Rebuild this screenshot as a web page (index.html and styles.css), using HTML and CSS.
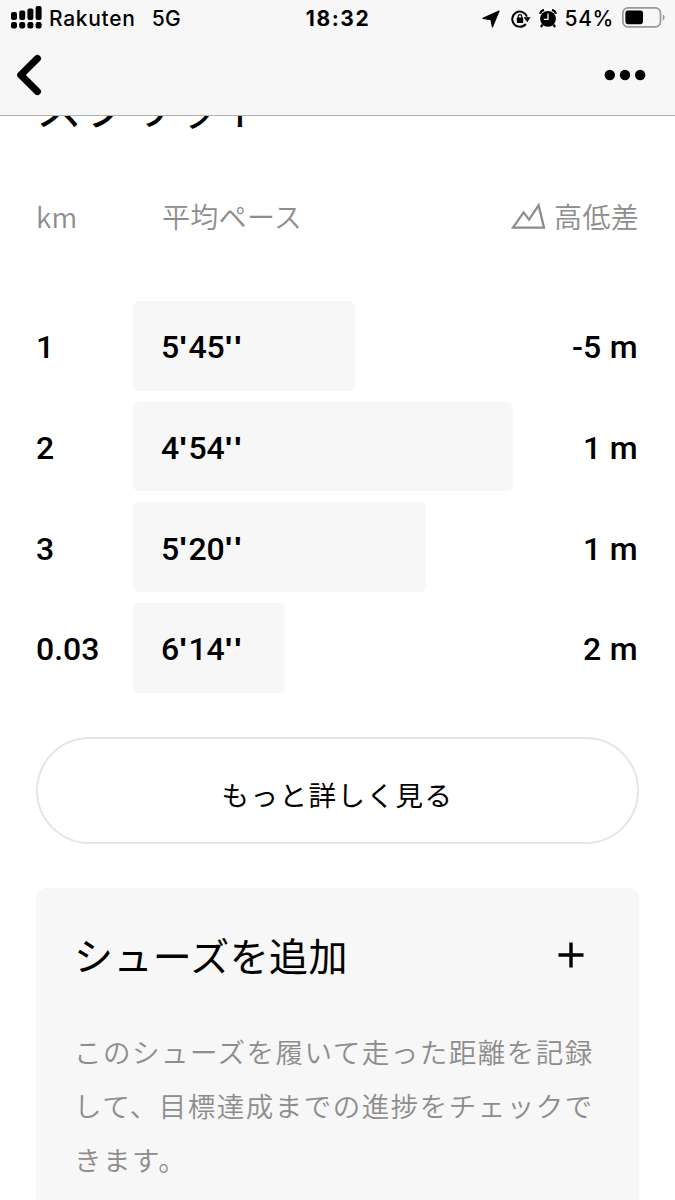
FILE: index.html
```html
<!DOCTYPE html>
<html lang="ja">
<head>
    <meta charset="UTF-8">
    <meta name="viewport" content="width=device-width, initial-scale=1.0">
    <title>スプリット</title>
    <link rel="stylesheet" href="styles.css">
</head>
<body>

    <header class="top-bar">
        <div class="status">
            <div class="status-left">
                <svg class="signal" width="31" height="24" viewBox="0 0 31 24">
                    <rect x="0" y="7" width="6" height="8" rx="2"/>
                    <rect x="8.2" y="5.6" width="6" height="9.4" rx="2"/>
                    <rect x="16.4" y="3.6" width="6" height="11.4" rx="2"/>
                    <rect x="24.6" y="1" width="6" height="14" rx="2"/>
                    <rect x="0" y="17" width="6" height="6.4" rx="2.2"/>
                    <rect x="8.2" y="17" width="6" height="6.4" rx="2.2"/>
                    <rect x="16.4" y="17" width="6" height="6.4" rx="2.2"/>
                    <rect x="24.6" y="17" width="6" height="6.4" rx="2.2"/>
                </svg>
                <span class="carrier">Rakuten</span>
                <span class="network">5G</span>
            </div>
            <div class="clock">18:32</div>
            <div class="status-right">
                <svg class="location" width="18" height="18" viewBox="0 0 18 18">
                    <path d="M17 1 L10.4 17 L9 9.6 L1 8.4 Z" stroke="#000" stroke-width="1.2" stroke-linejoin="round"/>
                </svg>
                <svg class="lock" width="20" height="18" viewBox="0 0 20 18">
                    <path d="M14.8 14 A7.6 7.6 0 1 1 16 6.6" fill="none" stroke="#000" stroke-width="2"/>
                    <path d="M12.6 7.2 H19.6 L16.2 12.2 Z"/>
                    <rect x="5.8" y="7.6" width="6.4" height="5.4" rx=".6"/>
                    <path d="M7.2 8.2 V6.4 a1.8 1.8 0 0 1 3.6 0 V8.2" fill="none" stroke="#000" stroke-width="1.2"/>
                </svg>
                <svg class="alarm" width="18" height="19" viewBox="0 0 18 19">
                    <circle cx="9" cy="9.8" r="7.9"/>
                    <path d="M1 4.8 Q1.8 1.6 5 .9 M17 4.8 Q16.2 1.6 13 .9" fill="none" stroke="#000" stroke-width="2.2"/>
                    <path d="M3.6 15.6 L1.9 18 M14.4 15.6 L16.1 18" stroke="#000" stroke-width="2.2"/>
                    <path d="M9 4.6 V10.3 H4.8" fill="none" stroke="#f7f7f7" stroke-width="1.3"/>
                </svg>
                <span class="percent">54%</span>
                <svg class="battery" width="43" height="21" viewBox="0 0 43 21">
                    <rect x=".9" y=".9" width="37.6" height="19" rx="5" fill="none" stroke="#999" stroke-width="1.7"/>
                    <rect x="3.4" y="3.6" width="17.6" height="13.6" rx="2.4"/>
                    <path d="M40.8 7.4 Q42.6 8 42.6 10.4 Q42.6 12.8 40.8 13.4 Z" fill="#999"/>
                </svg>
            </div>
        </div>
        <nav class="nav">
            <svg width="26" height="42" viewBox="0 0 26 42">
                <path d="M21.4 4.5 L4.8 21 L21.4 37.5" fill="none" stroke="#000" stroke-width="7.2" stroke-linecap="round" stroke-linejoin="round"/>
            </svg>
            <svg width="42" height="12" viewBox="0 0 42 12">
                <circle cx="5.8" cy="6" r="5.2"/>
                <circle cx="21" cy="6" r="5.2"/>
                <circle cx="36.2" cy="6" r="5.2"/>
            </svg>
        </nav>
    </header>

    <main>
        <h1>スプリット</h1>

        <div class="split-head">
            <span>km</span>
            <span class="pace-label">平均ペース</span>
            <span class="elevation">
                <svg width="35" height="28" viewBox="0 0 35 28">
                    <path d="M2 25.6 L12.6 10.4 L18 17.6 L27.6 3.4 L33 25.6 Z" fill="none" stroke="#8d8d8d" stroke-width="2.3"/>
                </svg>
                高低差
            </span>
        </div>

        <section class="splits">
            <div class="split">
                <span>1</span>
                <div class="bar" style="width: 222px">5<i>'</i>45<i>''</i></div>
                <span class="gain">-5 m</span>
            </div>
            <div class="split">
                <span>2</span>
                <div class="bar" style="width: 380px">4<i>'</i>54<i>''</i></div>
                <span class="gain">1 m</span>
            </div>
            <div class="split">
                <span>3</span>
                <div class="bar" style="width: 293px">5<i>'</i>20<i>''</i></div>
                <span class="gain">1 m</span>
            </div>
            <div class="split">
                <span>0.03</span>
                <div class="bar" style="width: 152px">6<i>'</i>14<i>''</i></div>
                <span class="gain">2 m</span>
            </div>
        </section>

        <button class="more">もっと詳しく見る</button>

        <section class="shoes">
            <div class="shoes-head">
                <h2>シューズを追加</h2>
                <svg width="26" height="26" viewBox="0 0 26 26">
                    <path d="M0.5 13 H25.5 M13 0.5 V25.5" stroke="#000" stroke-width="3.4"/>
                </svg>
            </div>
            <p>このシューズを履いて走った距離を記録<br>して、目標達成までの進捗をチェックで<br>きます。</p>
        </section>
    </main>

</body>
</html>
```
FILE: styles.css
```css
* {
    box-sizing: border-box;
}
body {
    margin: 0;
    height: 1200px;
    overflow: hidden;
    display: flex;
    flex-direction: column;
    background-color: #fff;
    color: #000;
    font-family: "Noto Sans CJK JP", sans-serif;
}
svg {
    display: block;
    flex: none;
}

/* Status bar and navigation */
.top-bar {
    flex: none;
    height: 116px;
    background-color: #f7f7f7;
    border-bottom: 1px solid #b2b2b2;
}
.status {
    display: grid;
    grid-template-columns: 1fr auto 1fr;
    align-items: center;
    height: 37px;
    padding: 0 10px 0 11px;
    font-family: Inter, sans-serif;
    font-size: 21px;
    font-weight: 500;
}
.status-left, .status-right {
    display: flex;
    align-items: center;
}
.status-right {
    justify-content: flex-end;
}
.signal {
    margin: -3px 7px 0 0;
}
.carrier {
    letter-spacing: 0.7px;
}
.network {
    margin-left: 16px;
    letter-spacing: 0.5px;
}
.clock {
    font-weight: 700;
    letter-spacing: 1.6px;
}
.location {
    margin-right: 11px;
}
.lock {
    margin-right: 8px;
}
.alarm {
    margin-right: 8px;
}
.percent {
    margin-right: 8px;
    letter-spacing: 0.6px;
}
.battery {
    margin-top: -2px;
}
.nav {
    display: flex;
    justify-content: space-between;
    align-items: center;
    height: 75px;
    padding: 0 29px 0 16px;
}

/* Splits */
main {
    flex: 1;
    padding: 0 36px;
    overflow: hidden;
}
h1 {
    margin: -38px 0 0;
    font-size: 46px;
    font-weight: 400;
    line-height: 54px;
    letter-spacing: 0.6px;
}
.split-head {
    display: flex;
    align-items: center;
    height: 40px;
    margin-top: 64px;
    color: #8d8d8d;
    font-size: 28px;
    font-weight: 350;
    letter-spacing: 0.3px;
}
.split-head span:first-child {
    width: 126px;
}
.elevation {
    display: flex;
    align-items: center;
    gap: 8px;
    margin-left: auto;
}
.splits {
    display: grid;
    gap: 11px;
    margin-top: 65px;
    font-family: Roboto, sans-serif;
    font-size: 32px;
    font-weight: 500;
}
.split {
    display: grid;
    grid-template-columns: 97px 1fr auto;
    align-items: center;
    height: 89.7px;
}
.split span {
    padding-top: 3px;
}
.gain {
    padding-right: 1px;
    letter-spacing: 0.3px;
}
.bar {
    display: flex;
    align-items: center;
    height: 100%;
    padding: 3px 0 0 28px;
    border-radius: 6px;
    background-color: #f7f7f7;
}
.bar i {
    font-family: "Liberation Sans", sans-serif;
    font-style: normal;
    font-weight: 700;
    letter-spacing: 1.6px;
}

/* Details button */
.more {
    display: block;
    width: 603px;
    height: 107px;
    margin-top: 44px;
    padding: 8px 0 0;
    border: 2px solid #e5e5e5;
    border-radius: 54px;
    background-color: #fff;
    color: #000;
    font-family: inherit;
    font-size: 27.5px;
    letter-spacing: 1.5px;
}

/* Shoes card */
.shoes {
    width: 603px;
    height: 330px;
    margin-top: 44px;
    padding: 40px 38px;
    border-radius: 10px;
    background-color: #f7f7f7;
}
.shoes-head {
    display: flex;
    justify-content: space-between;
    align-items: center;
    height: 54px;
    padding-right: 17px;
}
h2 {
    margin: -2px 0 0;
    font-size: 39px;
    font-weight: 400;
    letter-spacing: 0.4px;
}
p {
    margin: 42px 0 0;
    color: #8d8d8d;
    font-size: 27.5px;
    font-weight: 350;
    line-height: 54px;
    letter-spacing: 1.5px;
    white-space: nowrap;
}
```
